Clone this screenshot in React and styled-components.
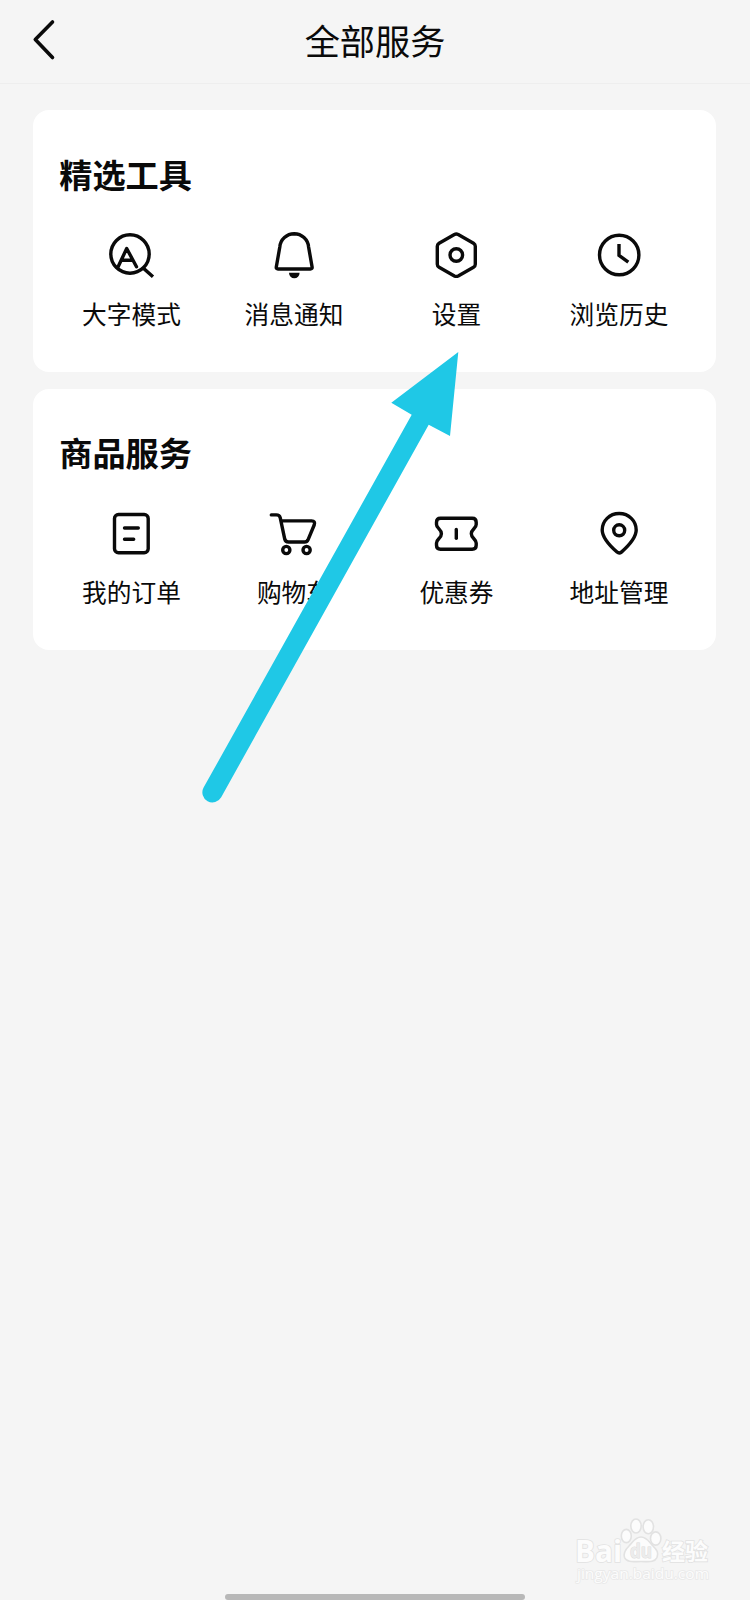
import styled, { createGlobalStyle } from "styled-components";

const GlobalStyle = createGlobalStyle`
    * {
        box-sizing : border-box;
    }

    body {
        margin : 0;
        background-color : #f5f5f5;
        font-family : "Noto Sans CJK SC", sans-serif;
        color : #0a0a0a;
    }
`

const Container = styled.div`
    position : relative;
    width : 750px;
    height : 1600px;
    overflow : hidden;

    display : flex;
    flex-direction : column;
    align-items : center;

    background-color : #f5f5f5;
`

const Header = styled.header`
    width : 100%;
    height : 84px;
    padding : 0 32px 4px;
    border-bottom : 1px solid #eeeeee;

    display : grid;
    grid-template-columns : 24px 1fr 24px;
    align-items : center;
`

const BackButton = styled.button`
    width : 24px;
    height : 42px;
    padding : 0;
    border : none;
    background-color : transparent;
    cursor : pointer;

    svg {
        display : block;
    }
`

const PageTitle = styled.h1`
    margin : 0;
    text-align : center;
    font-weight : 400;
    font-size : 35.2px;
    line-height : 42px;
`

const Content = styled.main`
    width : 683px;
    margin-top : 26px;
    margin-right : 0.6px;

    display : flex;
    flex-direction : column;
    gap : 17px;
`

const Card = styled.section`
    height : 261.5px;
    padding : 43.5px 16px 0 17px;
    border-radius : 16px;
    background-color : white;
`

const CardTitle = styled.h2`
    margin : 0 0 0 9px;
    font-weight : 700;
    font-size : 33.2px;
    line-height : 40px;
`

const ServiceGrid = styled.div`
    margin-top : 37px;

    display : grid;
    grid-template-columns : repeat(4, 1fr);
`

const ServiceItem = styled.div`
    display : flex;
    flex-direction : column;
    align-items : center;
    gap : 19.4px;
    cursor : pointer;
`

const ServiceIcon = styled.svg`
    width : 48px;
    height : 48px;
    overflow : visible;

    fill : none;
    stroke : #0a0a0a;
    stroke-width : 3.4;
    stroke-linecap : round;
    stroke-linejoin : round;
`

const ServiceName = styled.span`
    font-size : 24.7px;
    line-height : 30px;
    white-space : nowrap;
`

const HomeBar = styled.div`
    width : 300px;
    height : 6px;
    margin-top : auto;
    border-radius : 3px;
    background-color : #b8b8b8;
`

/* drawn over the cards */
const Arrow = styled.svg`
    position : absolute;
    left : 200px;
    top : 350px;
    fill : #1fc8e6;
`

const Watermark = styled.svg`
    position : absolute;
    left : 570px;
    top : 1512px;

    fill : #fcfcfc;
    stroke : #e2e2e2;
    stroke-width : 1.6;

    text {
        font-family : "Open Sans", "Noto Sans CJK SC", sans-serif;
        font-weight : 700;
        paint-order : stroke;
    }

    .url {
        font-weight : 400;
        stroke : #e9e9e9;
    }

    .du {
        fill : #ececec;
        stroke : #dcdcdc;
        stroke-width : 1;
    }
`

const icons = {
    zoomText: (
        <>
            <circle cx="23" cy="23" r="19.2" />
            <path d="M11 36 19.7 17.5 29.5 35.8M14.5 29.3H25" />
            <path d="M36.5 37.3 44.7 44.6" strokeLinecap="square" />
        </>
    ),
    bell: (
        <>
            <path d="M24.2 2.7A14.5 14.5 0 0 0 9.8 16L6.3 36Q6 38 8 38H40.4Q42.4 38 42.1 36L38.6 16A14.5 14.5 0 0 0 24.2 2.7Z" />
            <path d="M19 41.7H29.6A5.3 5.6 0 0 1 19 41.7Z" fill="#0a0a0a" stroke="none" />
        </>
    ),
    setting: (
        <>
            <path d="M22.4 3.5Q24.3 2.5 26.2 3.5L41.5 12.2Q43.3 13.3 43.3 15.2V33.2Q43.3 35.2 41.5 36.2L26.2 44.9Q24.3 45.9 22.4 44.9L7.1 36.2Q5.3 35.2 5.3 33.2V15.2Q5.3 13.3 7.1 12.2Z" />
            <circle cx="24.3" cy="24" r="6.3" />
        </>
    ),
    history: (
        <>
            <circle cx="24.2" cy="24" r="19.7" />
            <path d="M24 13V24.4L33.3 31.2" strokeLinecap="butt" strokeLinejoin="miter" />
        </>
    ),
    order: (
        <>
            <rect x="7.5" y="5.5" width="33.7" height="38.3" rx="4" />
            <path d="M17.5 19H31.3M17.5 30.3H26.7" />
        </>
    ),
    cart: (
        <>
            <path d="M1.3 5.9H6.3Q9.5 5.9 10.2 8.6L14.8 30.3Q15.5 33 18.5 33H34.6Q37 33 38 30.8L44.2 16Q45.6 11.9 41.6 11.9H11.2" />
            <circle cx="16.3" cy="41" r="3.6" />
            <circle cx="36.6" cy="41" r="3.6" />
        </>
    ),
    coupon: (
        <>
            <path d="M8.5 9.2H40.2Q44.2 9.2 44.2 13.2V15.5C44.2 19.5 39.3 20 39.3 24.7S44.2 30 44.2 34V36.2Q44.2 40.2 40.2 40.2H8.5Q4.5 40.2 4.5 36.2V34C4.5 30 9.4 29.5 9.4 24.7S4.5 19.5 4.5 15.5V13.2Q4.5 9.2 8.5 9.2Z" />
            <path d="M24.3 20.5V29.3" />
        </>
    ),
    address: (
        <>
            <path d="M24.2 4.5C14.5 4.5 7.2 12 7.2 21C7.2 29 14.8 36.7 22 43.1Q24.2 45 26.4 43.1C33.6 36.7 41.2 29 41.2 21C41.2 12 33.9 4.5 24.2 4.5Z" />
            <circle cx="24.2" cy="21.3" r="5.5" />
        </>
    ),
}

const sections = [
    {
        title: "精选工具",
        items: [
            { name: "大字模式", icon: "zoomText" },
            { name: "消息通知", icon: "bell" },
            { name: "设置", icon: "setting" },
            { name: "浏览历史", icon: "history" },
        ],
    },
    {
        title: "商品服务",
        items: [
            { name: "我的订单", icon: "order" },
            { name: "购物车", icon: "cart" },
            { name: "优惠券", icon: "coupon" },
            { name: "地址管理", icon: "address" },
        ],
    },
]

const App = () => {
    return (
        <>
        <GlobalStyle />
        <Container>
            <Header>
                <BackButton aria-label="返回">
                    <svg width="24" height="42" fill="none" stroke="#0a0a0a" strokeWidth="3.6" strokeLinecap="round" strokeLinejoin="round">
                        <path d="M20.5 3 3.3 20.5 20.5 38.5" />
                    </svg>
                </BackButton>
                <PageTitle>全部服务</PageTitle>
            </Header>

            <Content>
                {sections.map(section => (
                    <Card key={section.title}>
                        <CardTitle>{section.title}</CardTitle>
                        <ServiceGrid>
                            {section.items.map(el => (
                                <ServiceItem key={el.name}>
                                    <ServiceIcon viewBox="0 0 48 48">{icons[el.icon]}</ServiceIcon>
                                    <ServiceName>{el.name}</ServiceName>
                                </ServiceItem>
                            ))}
                        </ServiceGrid>
                    </Card>
                ))}
            </Content>

            <HomeBar />

            <Arrow width="262" height="456">
                <path d="M258.3 2 191.3 52.7 211.7 64.7 3.6 437.6A10 10 0 0 0 21.2 447.2L228.7 74.7 250 86Z" />
            </Arrow>

            <Watermark width="150" height="76">
                <text x="5" y="49.5" fontSize="30" textLength="47" lengthAdjust="spacingAndGlyphs">Bai</text>
                <ellipse cx="56.3" cy="24" rx="5" ry="6.6" />
                <ellipse cx="66" cy="14" rx="5.2" ry="7" />
                <ellipse cx="78.3" cy="14.8" rx="5.2" ry="7" />
                <ellipse cx="85.7" cy="26.5" rx="5.2" ry="6.6" />
                <path d="M71 25C77 25 79 30 83 34C87 38 89 41 87 45.5C84.5 51 78 49.5 71 49.5S57 51 54.5 45.5C53 41 55 38 59 34C63 30 65 25 71 25Z" />
                <text className="du" x="60" y="46" fontSize="19" textLength="22" lengthAdjust="spacingAndGlyphs">du</text>
                <text x="92" y="47.5" fontSize="23" textLength="46">经验</text>
                <text className="url" x="7" y="67" fontSize="15" textLength="132" lengthAdjust="spacingAndGlyphs">jingyan.baidu.com</text>
            </Watermark>
        </Container>
        </>
    )
}

export default App;
